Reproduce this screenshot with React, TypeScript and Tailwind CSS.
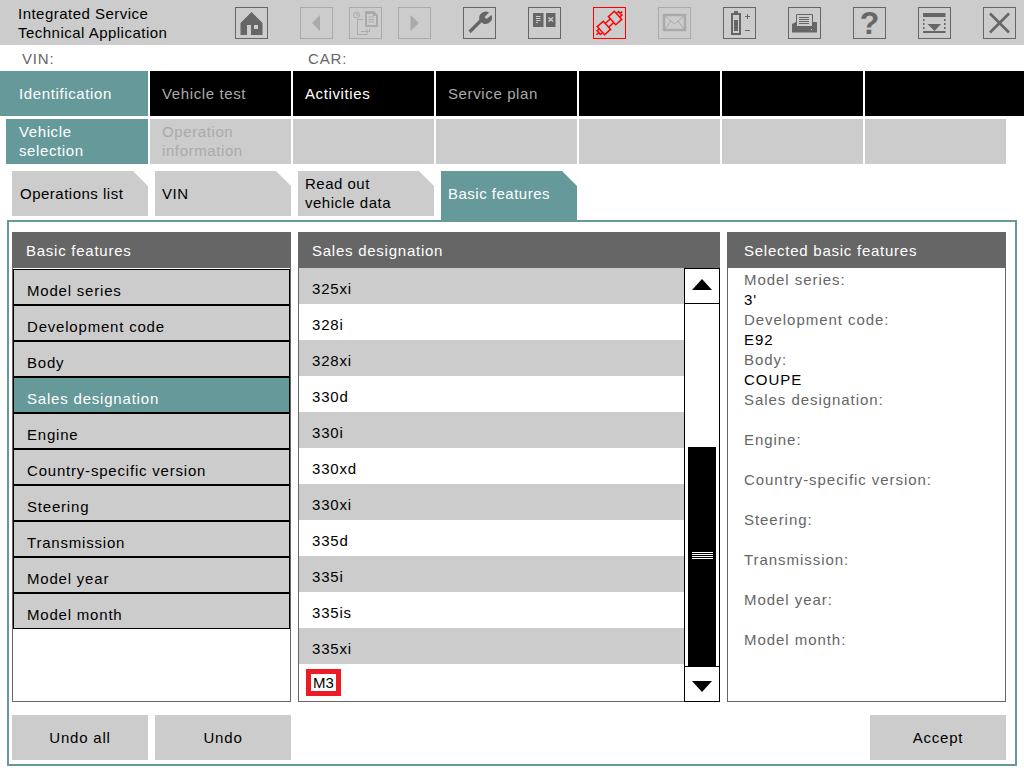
import React from "react";

const G = "#666666";
const D = "#aaaaaa";
const BG = "#cccccc";

function IconBox({ color, children, className = "" }: { color: "dark" | "light" | "red"; children: React.ReactNode; className?: string }) {
  const border = color === "dark" ? "border-[#666666]" : color === "light" ? "border-[#aaaaaa]" : "border-[#ff0000]";
  return (
    <div className={`w-[33px] h-[32px] border shrink-0 relative flex items-center justify-center ${border} ${className}`}>
      {children}
    </div>
  );
}

function Svg({ children }: { children: React.ReactNode }) {
  return (
    <svg width="33" height="32" viewBox="0 0 33 32" className="absolute -left-px -top-px" fill="none">
      {children}
    </svg>
  );
}

function Toolbar() {
  return (
    <div className="flex items-center h-[32px]">
      <IconBox color="dark">
        <Svg>
          <path fillRule="evenodd" fill={G} d="M16.5 5 L27.5 16 V28 H5.5 V16 Z M12 18 H16 V28 H12 Z M19 18 H23 V22 H19 Z" />
        </Svg>
      </IconBox>
      <IconBox color="light" className="ml-[32px]">
        <Svg>
          <path fill={D} d="M20 8 V24 L12 16 Z" />
        </Svg>
      </IconBox>
      <IconBox color="light" className="ml-[16px]">
        <Svg>
          <circle cx="7.5" cy="8" r="3" stroke={D} strokeWidth="1" />
          <path stroke={D} strokeWidth="1" d="M7.5 6 V8 H9.5" />
          <path fill={D} fillRule="evenodd" d="M16 4 H25 L29 8 V20 H16 Z M18 7 V18 H27 V9 H24 V7 Z" />
          <path stroke={D} strokeWidth="1" d="M19.5 10 H25 M19.5 12.5 H25 M19.5 15 H25" />
          <path stroke={D} strokeWidth="1" d="M14 12.5 H8.5 V27.5 H18 V22 M12 24.5 H20.5 V21.5" />
        </Svg>
      </IconBox>
      <IconBox color="light" className="ml-[16px]">
        <Svg>
          <path fill={D} d="M12.5 8 V24 L21 16 Z" />
        </Svg>
      </IconBox>
      <IconBox color="dark" className="ml-[32px]">
        <Svg>
          <path stroke={G} strokeWidth="3.4" d="M6.5 25 L18 13.5" />
          <path fill={G} d="M26 5.5 L21.5 10 L23.5 12 L28.5 8 A 6.5 6.5 0 0 1 20 16.5 L16.5 13 A 6.5 6.5 0 0 1 26 5.5 Z" />
          <circle cx="6" cy="25.5" r="1" fill={BG} />
        </Svg>
      </IconBox>
      <IconBox color="dark" className="ml-[32px]">
        <Svg>
          <path fill={G} d="M5 6 H15.5 V20 H5 Z M18 6 H27.5 V20 H18 Z" />
          <path stroke={BG} strokeWidth="1" d="M8 9.5 H12.5 M8 11.5 H12.5 M8 13.5 H12.5 M8 15.5 H10" />
          <path stroke={BG} strokeWidth="1.6" d="M20.5 10.5 L25 14.5 M25 10.5 L20.5 14.5" />
        </Svg>
      </IconBox>
      <IconBox color="red" className="ml-[32px]">
        <Svg>
          <g transform="rotate(-42 16.5 16)" stroke="#ff0000" strokeWidth="1.5">
            <rect x="20" y="10.5" width="8" height="11" />
            <path d="M28 13.5 H31 V18.5 H28 M31 16 H33.5" />
            <rect x="5" y="10.5" width="8" height="11" />
            <path d="M5 13.5 H2 V18.5 H5 M2 16 H-1" />
            <path d="M13 13.5 H20 M13 18.5 H20" />
          </g>
        </Svg>
      </IconBox>
      <IconBox color="light" className="ml-[32px]">
        <Svg>
          <rect x="6" y="8" width="21" height="15" stroke={D} strokeWidth="2.5" />
          <path stroke={D} strokeWidth="1" d="M7 9 L16.5 17 L26 9 M7 22 L13 14 M26 22 L20 14" />
        </Svg>
      </IconBox>
      <IconBox color="dark" className="ml-[32px]">
        <Svg>
          <path fill={G} fillRule="evenodd" d="M11 4 H15 V6 H18 V28 H8 V6 H11 Z M10 8 V26 H16 V8 Z" />
          <rect x="11" y="13" width="4" height="11" fill={G} />
          <path stroke={G} strokeWidth="1" d="M22 9.5 H27 M24.5 7 V12 M22 23.5 H27" />
        </Svg>
      </IconBox>
      <IconBox color="dark" className="ml-[32px]">
        <Svg>
          <path fill={BG} stroke={G} strokeWidth="1" d="M8.5 7.5 H24.5 V20.5 H8.5 Z" />
          <path fill={G} d="M8 15 V19 H25 V15 H29 V25.5 H4 V17 Z" />
          <path stroke={G} strokeWidth="1" d="M11 10.5 H21 M11 12.5 H21 M11 14.5 H21 M11 16.5 H21 M8 19.5 H25" />
          <rect x="23" y="22" width="1" height="1" fill={BG} />
        </Svg>
      </IconBox>
      <IconBox color="dark" className="ml-[32px]">
        <span className="font-['Liberation_Sans',sans-serif] font-bold text-[32px] leading-none text-[#666666]">?</span>
      </IconBox>
      <IconBox color="dark" className="ml-[32px]">
        <Svg>
          <rect x="5" y="6" width="22.5" height="4" fill={G} />
          <path stroke={G} strokeWidth="1.5" strokeDasharray="2 2" d="M5.8 12 V24 M26.8 12 V24" />
          <path fill={G} d="M9.5 17 H23 L16.5 24 Z" />
          <rect x="5" y="24" width="22.5" height="2" fill={G} />
        </Svg>
      </IconBox>
      <IconBox color="dark" className="ml-[32px]">
        <Svg>
          <path stroke={G} strokeWidth="2.6" d="M7 6.5 L26 25.5 M26 6.5 L7 25.5" />
        </Svg>
      </IconBox>
    </div>
  );
}

const CUT = "[clip-path:polygon(0_0,calc(100%-15px)_0,100%_15px,100%_100%,0_100%)]";

const topTabs: { t: string; w: string; cls: string }[] = [
  { t: "Identification", w: "w-[148px] pl-[19px]", cls: "bg-[#669999] text-white" },
  { t: "Vehicle test", w: "w-[141px] pl-[12px]", cls: "bg-black text-[#aaaaaa]" },
  { t: "Activities", w: "w-[141px] pl-[12px]", cls: "bg-black text-white" },
  { t: "Service plan", w: "w-[141px] pl-[12px]", cls: "bg-black text-[#aaaaaa]" },
  { t: "", w: "w-[141px]", cls: "bg-black" },
  { t: "", w: "w-[141px]", cls: "bg-black" },
  { t: "", w: "w-[159px]", cls: "bg-black" },
];

const leftItems = ["Model series", "Development code", "Body", "Sales designation", "Engine", "Country-specific version", "Steering", "Transmission", "Model year", "Model month"];
const rows = ["325xi", "328i", "328xi", "330d", "330i", "330xd", "330xi", "335d", "335i", "335is", "335xi"];
const selected: [string, string][] = [
  ["Model series:", "3'"],
  ["Development code:", "E92"],
  ["Body:", "COUPE"],
  ["Sales designation:", ""],
  ["Engine:", ""],
  ["Country-specific version:", ""],
  ["Steering:", ""],
  ["Transmission:", ""],
  ["Model year:", ""],
  ["Model month:", ""],
];

function Header({ children, pad = "pl-[14px]" }: { children: React.ReactNode; pad?: string }) {
  return <div className={`h-[36px] bg-[#666666] text-white flex items-center tracking-[0.75px] ${pad}`}>{children}</div>;
}

export default function App() {
  return (
    <div className="w-[1024px] h-[768px] overflow-hidden bg-white text-black text-[15px] leading-[19px] font-['Liberation_Sans',Arial,sans-serif]">
      <div className="h-[45px] bg-[#cccccc] flex items-center">
        <div className="w-[235px] pl-[18px] pt-px shrink-0 tracking-[0.48px]">
          <div>Integrated Service</div>
          <div>Technical Application</div>
        </div>
        <Toolbar />
      </div>
      <div className="h-[26px] flex items-center text-[#666666] tracking-[0.85px]">
        <div className="w-[308px] pl-[22px]">VIN:</div>
        <div>CAR:</div>
      </div>
      <div className="flex gap-[2px] h-[45px]">
        {topTabs.map((t, i) => (
          <div key={i} className={`flex items-center tracking-[0.62px] ${t.w} ${t.cls}`}>{t.t}</div>
        ))}
      </div>
      <div className="flex gap-[2px] h-[45px] mt-[3px] pl-[6px] tracking-[0.6px]">
        <div className="w-[142px] pl-[13px] pb-[2px] bg-[#669999] text-white flex items-center">Vehicle<br />selection</div>
        <div className="w-[141px] pl-[12px] pb-[2px] bg-[#cccccc] text-[#aaaaaa] flex items-center">Operation<br />information</div>
        {[0, 1, 2, 3, 4].map((i) => (
          <div key={i} className="w-[141px] bg-[#cccccc]" />
        ))}
      </div>
      <div className="flex h-[49px] mt-[7px] pl-[12px] gap-[7px] items-start tracking-[0.5px]">
        <div className={`w-[136px] h-[45px] pl-[8px] bg-[#cccccc] flex items-center ${CUT}`}>Operations list</div>
        <div className={`w-[136px] h-[45px] pl-[7px] bg-[#cccccc] flex items-center ${CUT}`}>VIN</div>
        <div className={`w-[136px] h-[45px] pl-[7px] pb-[2px] bg-[#cccccc] flex items-center ${CUT}`}>Read out<br />vehicle data</div>
        <div className={`w-[136px] h-[49px] pl-[7px] pb-[4px] bg-[#669999] text-white flex items-center ${CUT}`}>Basic features</div>
      </div>
      <div className="ml-[7px] w-[1010px] h-[546px] border-2 border-[#669999] pl-[3px] pr-[9px] pt-[10px] tracking-[0.8px]">
        <div className="flex gap-[7px] h-[470px]">
          <div className="w-[279px] flex flex-col">
            <Header>Basic features</Header>
            <div className="flex-1 border border-t-0 border-[#666666] pt-px">
              {leftItems.map((t) => (
                <div key={t} className={`h-[36px] border border-black flex items-center pl-[13px] pt-[6px] ${t === "Sales designation" ? "bg-[#669999] text-white" : "bg-[#cccccc]"}`}>{t}</div>
              ))}
            </div>
          </div>
          <div className="w-[422px] flex flex-col">
            <Header>Sales designation</Header>
            <div className="flex-1 flex min-h-0">
              <div className="flex-1 border-l border-b border-[#666666]">
                {rows.map((t, i) => (
                  <div key={t} className={`h-[36px] flex items-center pl-[13px] pt-[5px] ${i % 2 === 0 ? "bg-[#cccccc]" : "bg-white"}`}>{t}</div>
                ))}
                <div className="h-[36px] flex items-center pl-[7px]">
                  <span className="border-[5px] border-[#ed1c24] h-[27px] w-[35px] flex items-center justify-center tracking-normal">M3</span>
                </div>
              </div>
              <div className="w-[36px] flex flex-col">
                <div className="h-[36px] border border-black flex justify-center pt-[10px]">
                  <svg width="20" height="11" viewBox="0 0 20 11"><path d="M10 0 L20 11 H0 Z" fill="#000" /></svg>
                </div>
                <div className="flex-1 border-x border-black flex flex-col justify-end px-[3px]">
                  <div className="h-[219px] bg-black flex items-center justify-center">
                    <div className="w-[21px] flex flex-col gap-px -mt-[3px]">
                      <div className="h-px bg-white" />
                      <div className="h-px bg-white" />
                      <div className="h-px bg-white" />
                      <div className="h-px bg-white" />
                    </div>
                  </div>
                </div>
                <div className="h-[36px] border border-black flex justify-center pt-[14px]">
                  <svg width="20" height="11" viewBox="0 0 20 11"><path d="M0 0 H20 L10 11 Z" fill="#000" /></svg>
                </div>
              </div>
            </div>
          </div>
          <div className="w-[279px] flex flex-col">
            <Header pad="pl-[17px]">Selected basic features</Header>
            <div className="flex-1 border border-t-0 border-[#666666] pl-[16px] pt-[2px] leading-[20px] tracking-[0.95px]">
              {selected.map(([l, v]) => (
                <div key={l}>
                  <div className="h-[20px] text-[#666666]">{l}</div>
                  <div className="h-[20px]">{v}</div>
                </div>
              ))}
            </div>
          </div>
        </div>
        <div className="flex mt-[13px] gap-[7px]">
          <div className="w-[136px] h-[45px] bg-[#cccccc] flex items-center justify-center">Undo all</div>
          <div className="w-[136px] h-[45px] bg-[#cccccc] flex items-center justify-center">Undo</div>
          <div className="w-[136px] h-[45px] bg-[#cccccc] flex items-center justify-center ml-auto">Accept</div>
        </div>
      </div>
    </div>
  );
}
